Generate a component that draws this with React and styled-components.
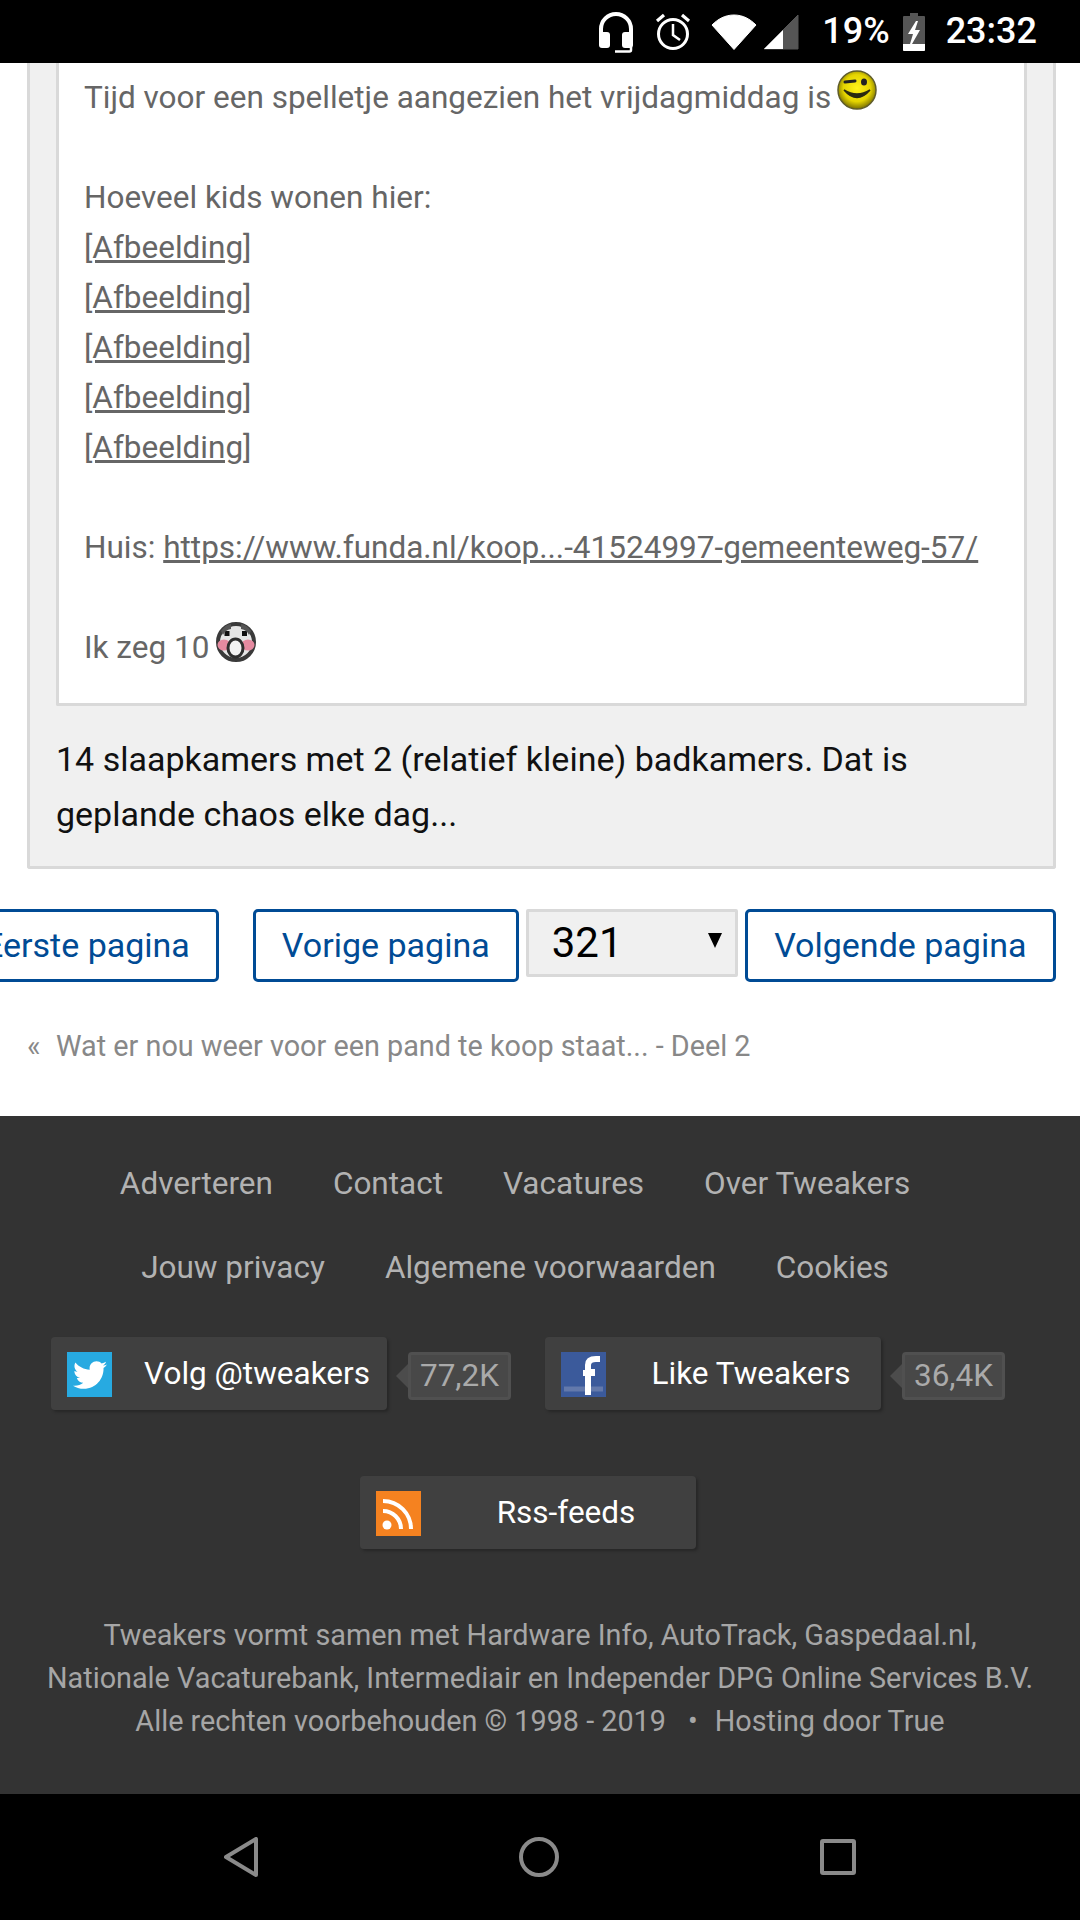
import React from 'react';
import styled, { createGlobalStyle } from 'styled-components';
import { FaTwitter } from 'react-icons/fa';

const Global = createGlobalStyle`
  html, body { margin: 0; padding: 0; background: #fff; }
  * { box-sizing: border-box; }
  a { color: inherit; }
`;
const Page = styled.div`
  width: 1080px; height: 1920px; overflow: hidden;
  display: flex; flex-direction: column;
  font-family: Roboto, "Liberation Sans", sans-serif;
`;
const StatusBar = styled.div`
  height: 63px; background: #000; color: #fff; flex: none;
  display: flex; align-items: center; justify-content: flex-end; padding-right: 43px;
`;
const StatusText = styled.span`
  font-size: 36px; font-weight: 500; line-height: 63px; margin-left: ${p => p.$ml}px; margin-right: ${p => p.$mr || 0}px; letter-spacing: 0;
`;
const StatusIcon = styled.svg`
  display: block; flex: none; margin-left: ${p => p.$ml || 0}px;
`;
const Main = styled.main`
  height: 1053px; flex: none; background: #fff; display: flex; flex-direction: column;
`;
const Post = styled.section`
  margin: 0 24px 0 27px; background: #f0f0f0; border: 3px solid #d9d9d9; border-top: 0; border-radius: 0 0 3px 3px;
  padding: 0 26px 25px 26px; height: 806px;
`;
const Quote = styled.blockquote`
  margin: 0; background: #fff; border: 3px solid #d9d9d9; border-top: 0; border-radius: 0 0 2px 2px;
  padding: 10px 25px 30px 25px; height: 643px;
  font-size: 31.5px; line-height: 50px; color: #666;
`;
const Reply = styled.p`
  margin: 26px 0 0; font-size: 34px; line-height: 55px; color: #111;
`;
const Emote = styled.svg`
  display: inline-block; vertical-align: ${p => p.$va}px; margin: -12px 0 0 ${p => p.$ml}px;
  filter: blur(.7px);
`;
const Pager = styled.nav`
  display: flex; justify-content: flex-end; align-items: flex-start; margin-top: 40px; padding-right: 24px; flex: none;
`;
const PageButton = styled.a`
  flex: none; height: 73px; padding: 0 ${p => p.$pad || 26}px; border: 3px solid #004b95; border-radius: 5px; background: #fff;
  color: #004b95; font-size: 34px; line-height: 67px; margin-left: ${p => p.$ml}px; white-space: nowrap;
`;
const SelectBox = styled.div`
  flex: none; width: 212px; height: 68px; margin-left: ${p => p.$ml}px; background: #f0f0f0; border: 3px solid #d9d9d9; border-radius: 2px;
  display: flex; align-items: center; justify-content: space-between; padding: 0 13px 2px 23px; color: #000; font-size: 42px;
  &::after { content: ''; width: 0; height: 0; border-left: 7px solid transparent; border-right: 7px solid transparent; border-top: 15px solid #000; margin-top: -4px; }
`;
const Crumb = styled.div`
  margin: 46px 0 0 27px; display: flex; color: #888; font-size: 28.8px; line-height: 36px; white-space: nowrap;
`;
const CrumbMark = styled.span`
  width: 29px; flex: none;
`;
const Footer = styled.footer`
  height: 678px; flex: none; background: #333; display: flex; flex-direction: column; align-items: center; padding-top: 26px;
`;
const LinkRow = styled.div`
  width: 100%; padding-right: 50px;
  display: flex; justify-content: center; gap: 60px; color: #b2b2b2; font-size: 31.5px; line-height: 84px; height: 84px; white-space: nowrap;
`;
const Social = styled.div`
  width: 100%; padding-right: 24px; display: flex; flex-direction: column; align-items: center; gap: 66px; margin-top: 27px;
`;
const SocialRow = styled.div`
  display: flex; justify-content: center; gap: 34px;
`;
const SocialGroup = styled.div`
  display: flex; align-items: flex-start; gap: 21px;
`;
const SocialButton = styled.a`
  position: relative; display: block; width: 336px; height: 73px; padding-left: 76px; background: #404040; border-radius: 4px;
  box-shadow: 2px 2px 3px rgba(0,0,0,.25); color: #fff; font-size: 31.5px; line-height: 74px; text-align: center; white-space: nowrap;
`;
const BrandIcon = styled.span`
  position: absolute; left: 16px; top: 15px; width: 45px; height: 45px; background: ${p => p.$bg};
  display: flex; align-items: center; justify-content: center; overflow: hidden;
`;
const Soft = styled.svg`
  display: block; filter: blur(.7px);
`;
const Count = styled.span`
  position: relative; display: block; margin-top: 15px; width: 103px; height: 48px; background: #484848; border: 3px solid #505050; border-radius: 4px;
  color: #aaa; font-size: 31.5px; line-height: 42px; text-align: center;
  &::before { content: ''; position: absolute; left: -15px; top: 9px; border-top: 12px solid transparent; border-bottom: 12px solid transparent; border-right: 12px solid #4c4c4c; }
`;
const Legal = styled.p`
  margin: 65px 0 0; text-align: center; color: #a6a6a6; font-size: 28.8px; line-height: 43px; white-space: nowrap;
`;
const Dot = styled.span`
  margin: 0 17px 0 22px;
`;
const NavBar = styled.div`
  height: 126px; flex: none; background: #000; display: flex; align-items: center; justify-content: center; gap: 261px;
`;
const NavIcon = styled.svg`
  display: block; flex: none;
`;

const Wink = () => (
  <Emote $ml={6} $va={-2} width="40" height="40" viewBox="0 0 40 40">
    <defs>
      <radialGradient id="wf" cx="50%" cy="45%" r="55%">
        <stop offset="0" stopColor="#fff21a" /><stop offset=".65" stopColor="#e4d400" /><stop offset="1" stopColor="#7a7000" />
      </radialGradient>
    </defs>
    <circle cx="20" cy="20" r="19" fill="url(#wf)" stroke="#5f5c2a" strokeWidth="1.5" />
    <path d="M8 12 L18 11" stroke="#222" strokeWidth="3" strokeLinecap="round" />
    <ellipse cx="27" cy="12" rx="3" ry="3.5" fill="#222" />
    <path d="M7 20 Q20 35 33 20 Q20 28 7 20Z" fill="#2a2a10" stroke="#2a2a10" strokeWidth="1.5" />
  </Emote>
);
const Shock = () => (
  <Emote $ml={7} $va={-4} width="40" height="40" viewBox="0 0 40 40">
    <circle cx="20" cy="20" r="18" fill="#e6e6e6" stroke="#3a3a3a" strokeWidth="4" />
    <ellipse cx="8" cy="23" rx="6.5" ry="5.5" fill="#e58aa0" />
    <ellipse cx="32" cy="23" rx="6.5" ry="5.5" fill="#e58aa0" />
    <rect x="8.5" y="9" width="5" height="5" fill="#111" />
    <rect x="26" y="9" width="5" height="5" fill="#111" />
    <ellipse cx="19.5" cy="26" rx="7.5" ry="9" fill="#f2f2f2" stroke="#2e2e2e" strokeWidth="3" />
    <path d="M5 9 Q10 2 15 2 L15 7 Q9 8 7 13Z M35 9 Q30 2 25 2 L25 7 Q31 8 33 13Z" fill="#555" />
  </Emote>
);

export default function App() {
  return (
    <Page>
      <Global />
      <StatusBar>
        <StatusIcon width="36" height="42" viewBox="0 0 36 42" fill="none">
          <path d="M3 26 V18 a15 15 0 0 1 30 0 V26" stroke="#fff" strokeWidth="4" />
          <rect x="1" y="21" width="11" height="16" rx="3" fill="#fff" />
          <rect x="24" y="21" width="11" height="16" rx="3" fill="#fff" />
          <path d="M33 36 V39 a1.5 1.5 0 0 1 -1.5 1.5 H17" stroke="#fff" strokeWidth="2.5" />
        </StatusIcon>
        <StatusIcon $ml={21} width="36" height="40" viewBox="0 0 36 40" fill="none" stroke="#fff">
          <circle cx="18" cy="22" r="14.5" strokeWidth="3" />
          <path d="M18 12 V23 L25 28" strokeWidth="2.5" />
          <path d="M2 9 L9 3 M34 9 L27 3" strokeWidth="3.2" />
        </StatusIcon>
        <StatusIcon $ml={20} width="46" height="36" viewBox="0 0 46 36">
          <path d="M23 35.5 L1 11 C7 5 14 1 23 1 C32 1 39 5 45 11Z" fill="#fff" stroke="#fff" strokeLinejoin="round" />
        </StatusIcon>
        <StatusIcon $ml={6} width="36" height="36" viewBox="0 0 36 36">
          <path d="M35 1 V35 H1Z" fill="#555" stroke="#555" strokeLinejoin="round" />
          <path d="M20 16 V35 H1Z" fill="#fff" />
        </StatusIcon>
        <StatusText $ml={23} $mr={13}>19%</StatusText>
        <StatusIcon width="22" height="38" viewBox="0 0 22 38">
          <path d="M7 0 H15 V3 H21 a1 1 0 0 1 1 1 V37 a1 1 0 0 1 -1 1 H1 a1 1 0 0 1 -1 -1 V4 a1 1 0 0 1 1 -1 H7Z" fill="#555" />
          <path d="M0 31 H22 V37 a1 1 0 0 1 -1 1 H1 a1 1 0 0 1 -1 -1Z" fill="#fff" />
          <path d="M13 8 L5 21 H10 L7 31 H9 L17 17 H12 L15 8Z" fill="#fff" />
        </StatusIcon>
        <StatusText $ml={21}>23:32</StatusText>
      </StatusBar>
      <Main>
        <Post>
          <Quote>
            Tijd voor een spelletje aangezien het vrijdagmiddag is<Wink /><br />
            <br />
            Hoeveel kids wonen hier:<br />
            <a href="#a">[Afbeelding]</a><br />
            <a href="#a">[Afbeelding]</a><br />
            <a href="#a">[Afbeelding]</a><br />
            <a href="#a">[Afbeelding]</a><br />
            <a href="#a">[Afbeelding]</a><br />
            <br />
            Huis: <a href="#a">https://www.funda.nl/koop...-41524997-gemeenteweg-57/</a><br />
            <br />
            Ik zeg 10<Shock />
          </Quote>
          <Reply>14 slaapkamers met 2 (relatief kleine) badkamers. Dat is<br />geplande chaos elke dag...</Reply>
        </Post>
        <Pager>
          <PageButton $ml={0}>Eerste pagina</PageButton>
          <PageButton $ml={34}>Vorige pagina</PageButton>
          <SelectBox $ml={7}>321</SelectBox>
          <PageButton $ml={7} $pad={26.5}>Volgende pagina</PageButton>
        </Pager>
        <Crumb><CrumbMark>«</CrumbMark>Wat er nou weer voor een pand te koop staat... - Deel 2</Crumb>
      </Main>
      <Footer>
        <LinkRow><span>Adverteren</span><span>Contact</span><span>Vacatures</span><span>Over Tweakers</span></LinkRow>
        <LinkRow><span>Jouw privacy</span><span>Algemene voorwaarden</span><span>Cookies</span></LinkRow>
        <Social>
          <SocialRow>
            <SocialGroup>
              <SocialButton>
                <BrandIcon $bg="#27aae1"><Soft as={FaTwitter} size={34} color="#fff" /></BrandIcon>
                Volg @tweakers
              </SocialButton>
              <Count>77,2K</Count>
            </SocialGroup>
            <SocialGroup>
              <SocialButton>
                <BrandIcon $bg="#3b5a9b">
                  <Soft width="45" height="45" viewBox="0 0 45 45">
                    <path d="M3 37 H42" stroke="#6379ab" strokeWidth="5" />
                    <path d="M27 43 V20 H34 M22 21 H34 M27 21 V13 Q27 7 35 7 H39" fill="none" stroke="#fff" strokeWidth="6" />
                  </Soft>
                </BrandIcon>
                Like Tweakers
              </SocialButton>
              <Count>36,4K</Count>
            </SocialGroup>
          </SocialRow>
          <SocialButton>
            <BrandIcon $bg="#f58220">
              <Soft width="45" height="45" viewBox="0 0 45 45" fill="none" stroke="#fff" strokeWidth="4">
                <circle cx="11" cy="34" r="4.5" fill="#fff" stroke="none" />
                <path d="M7 20 A18 18 0 0 1 25 38" />
                <path d="M7 10 A28 28 0 0 1 35 38" />
              </Soft>
            </BrandIcon>
            Rss-feeds
          </SocialButton>
        </Social>
        <Legal>
          Tweakers vormt samen met Hardware Info, AutoTrack, Gaspedaal.nl,<br />
          Nationale Vacaturebank, Intermediair en Independer DPG Online Services B.V.<br />
          Alle rechten voorbehouden © 1998 - 2019<Dot>•</Dot>Hosting door True
        </Legal>
      </Footer>
      <NavBar>
        <NavIcon width="34" height="40" viewBox="0 0 34 40" fill="none" stroke="#8a8a8a" strokeWidth="4" strokeLinejoin="round">
          <path d="M32 2 V38 L2 20Z" />
        </NavIcon>
        <NavIcon width="40" height="40" viewBox="0 0 40 40" fill="none" stroke="#8a8a8a" strokeWidth="4">
          <circle cx="20" cy="20" r="18" />
        </NavIcon>
        <NavIcon width="36" height="36" viewBox="0 0 36 36" fill="none" stroke="#8a8a8a" strokeWidth="4" strokeLinejoin="round">
          <rect x="2" y="2" width="32" height="32" rx="1" />
        </NavIcon>
      </NavBar>
    </Page>
  );
}
